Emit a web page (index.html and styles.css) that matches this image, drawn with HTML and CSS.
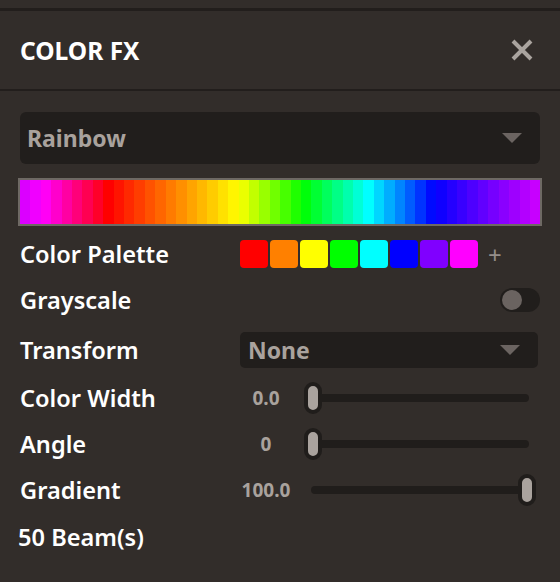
FILE: index.html
```html
<!DOCTYPE html>
<html lang="en">
<head>
  <meta charset="UTF-8" />
  <title>Color FX</title>
  <link rel="stylesheet" href="styles.css">
</head>
<body>
  <div class="topbar"></div>

  <div class="header">
    <h1>COLOR FX</h1>
    <button class="close" aria-label="Close">
      <svg width="22" height="22" viewBox="0 0 22 22">
        <path d="M2 2 L20 20 M20 2 L2 20" stroke="#aaa49f" stroke-width="4" />
      </svg>
    </button>
  </div>

  <div class="content">
    <div class="select big">
      <span>Rainbow</span>
      <span class="caret"></span>
    </div>

    <div class="rainbow" id="rainbow"></div>

    <div class="row palette-row">
      <label>Color Palette</label>
      <div class="swatches">
        <span class="swatch" style="background: #ff0000"></span>
        <span class="swatch" style="background: #ff8000"></span>
        <span class="swatch" style="background: #ffff00"></span>
        <span class="swatch" style="background: #00ff00"></span>
        <span class="swatch" style="background: #00ffff"></span>
        <span class="swatch" style="background: #0000ff"></span>
        <span class="swatch" style="background: #8000ff"></span>
        <span class="swatch" style="background: #ff00ff"></span>
        <span class="add">+</span>
      </div>
    </div>

    <div class="row toggle-row">
      <label>Grayscale</label>
      <div class="toggle"><span class="knob"></span></div>
    </div>

    <div class="row select-row">
      <label>Transform</label>
      <div class="select small">
        <span>None</span>
        <span class="caret"></span>
      </div>
    </div>

    <div class="row slider-row">
      <label>Color Width</label>
      <span class="value">0.0</span>
      <div class="slider"><span class="thumb" style="--v: 0"></span></div>
    </div>

    <div class="row slider-row">
      <label>Angle</label>
      <span class="value">0</span>
      <div class="slider"><span class="thumb" style="--v: 0"></span></div>
    </div>

    <div class="row slider-row">
      <label>Gradient</label>
      <span class="value">100.0</span>
      <div class="slider"><span class="thumb" style="--v: 1"></span></div>
    </div>

    <div class="beams">50 Beam(s)</div>
  </div>

  <script src="script.js"></script>
</body>
</html>
```

FILE: styles.css
```css
body {
  margin: 0;
  background: #322d2a;
  color: #fff;
  font-family: "Noto Sans", sans-serif;
}
.topbar {
  height: 8px;
  border-bottom: 3px solid #221e1c;
}
.header {
  height: 78px;
  display: flex;
  align-items: center;
  justify-content: space-between;
  padding: 0 27px 0 20px;
  border-bottom: 2px solid #221e1c;
}
.header h1 {
  margin: 0;
  font-size: 24.5px;
  font-weight: 700;
}
.close {
  background: none;
  border: none;
  padding: 0;
  width: 22px;
  height: 22px;
  cursor: pointer;
}
.close svg {
  display: block;
}
.content {
  padding: 21px 20px 0;
}
.select {
  display: flex;
  align-items: center;
  justify-content: space-between;
  background: #211e1c;
  border-radius: 6px;
  color: #a9a29d;
  font-weight: 700;
  font-size: 23px;
}
.select.big {
  height: 52px;
  padding: 0 18px 0 7px;
}
.select.small {
  height: 36px;
  width: 298px;
  box-sizing: border-box;
  padding: 0 18px 0 8px;
  border-radius: 5px;
}
.caret {
  width: 0;
  height: 0;
  border-left: 10px solid transparent;
  border-right: 10px solid transparent;
  border-top: 10px solid #6b6461;
}
.rainbow {
  display: flex;
  height: 44px;
  margin: 14px -2px 0;
  border: 2px solid #6e6964;
}
.rainbow span {
  flex: 1;
}
.row {
  display: flex;
  align-items: center;
}
.row label {
  width: 220px;
  flex-shrink: 0;
  font-size: 23.6px;
  font-weight: 600;
}
.palette-row {
  height: 28px;
  margin-top: 14px;
}
.swatches {
  display: flex;
  align-items: center;
  gap: 2px;
}
.swatch {
  width: 28px;
  height: 28px;
  border-radius: 4px;
}
.add {
  margin-left: 8px;
  color: #958e8a;
  font-size: 24px;
  font-weight: 400;
}
.toggle-row {
  height: 24px;
  margin-top: 20px;
}
.toggle {
  margin-left: auto;
  width: 40px;
  height: 24px;
  border-radius: 12px;
  background: #211e1c;
  display: flex;
  align-items: center;
  padding: 0 2px;
  box-sizing: border-box;
}
.knob {
  width: 20px;
  height: 20px;
  border-radius: 50%;
  background: #6a6360;
}
.select-row {
  height: 36px;
  margin-top: 20px;
}
.slider-row {
  height: 32px;
  margin-top: 14px;
}
.value {
  width: 52px;
  text-align: center;
  color: #a9a29d;
  font-size: 19px;
  font-weight: 700;
}
.slider {
  position: relative;
  margin-left: 19px;
  width: 218px;
  height: 8px;
  border-radius: 4px;
  background: #201d1b;
}
.thumb {
  position: absolute;
  top: 50%;
  left: calc(2px + var(--v) * (100% - 4px));
  transform: translate(-50%, -50%);
  width: 10px;
  height: 24px;
  border: 4px solid #201d1b;
  border-radius: 9px;
  background: #aaa39e;
}
.beams {
  margin: 14px 0 0 -2px;
  height: 34px;
  line-height: 34px;
  font-size: 23.6px;
  font-weight: 600;
}
```

FILE: script.js
```js
const palette = [
  [255, 0, 0], [255, 128, 0], [255, 255, 0], [0, 255, 0],
  [0, 255, 255], [0, 0, 255], [128, 0, 255], [255, 0, 255]
];
const beams = 50;
const rainbow = document.getElementById("rainbow");

for (let i = 0; i < beams; i++) {
  // palette spread across all beams, red lands on beam 8
  let p = ((i - 8) * palette.length / beams) % palette.length;
  if (p < 0) p += palette.length;
  const k = Math.floor(p);
  const f = p - k;
  const a = palette[k];
  const b = palette[(k + 1) % palette.length];
  const c = a.map((v, j) => Math.round(v + (b[j] - v) * f));
  const stripe = document.createElement("span");
  stripe.style.background = "rgb(" + c.join(",") + ")";
  rainbow.appendChild(stripe);
}
```
